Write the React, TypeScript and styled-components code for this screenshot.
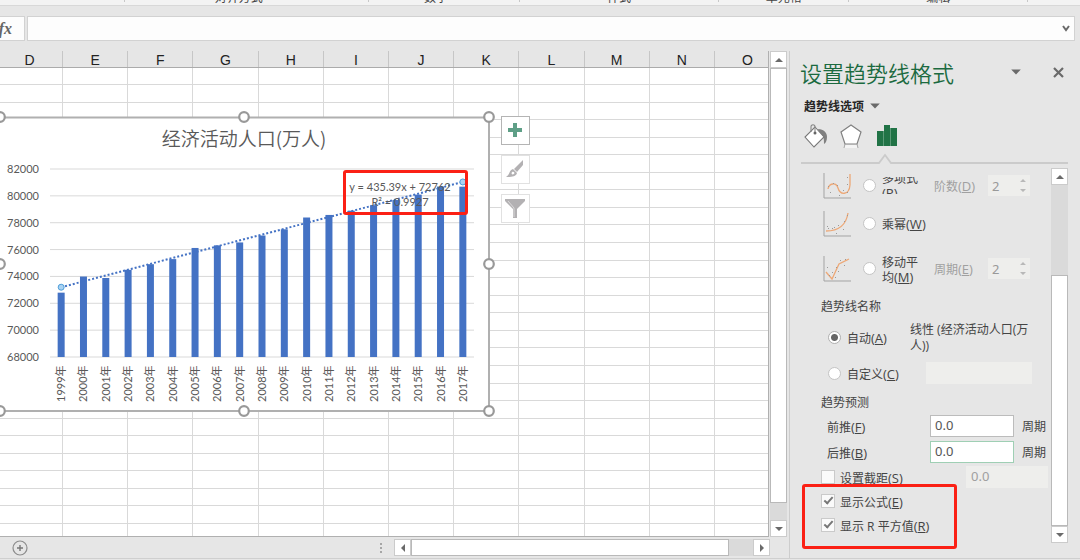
import React from "react";
import styled, { createGlobalStyle, css } from "styled-components";

const Global = createGlobalStyle`
  *, *::before, *::after { box-sizing: border-box; }
  body {
    margin: 0;
    background: #e6e6e6;
    color: #444;
    font: 12px/16px "Open Sans", "Noto Sans CJK SC", sans-serif;
  }
  button, input { font: inherit; color: inherit; margin: 0; padding: 0; }
  h2, h3, p { margin: 0; font-weight: 400; }
  svg { display: block; }
`;

const Window = styled.div`
  display: flex;
  flex-direction: column;
  min-height: 100vh;
  overflow: hidden;
`;

/* ---------- ribbon and formula bar ---------- */

const Ribbon = styled.div`
  display: flex;
  height: 6px;
  background: #f3f3f3;
  border-bottom: 1px solid #d8d8d8;
  overflow: hidden;
`;

const RibbonGroup = styled.div<{ $grow: number }>`
  flex: ${(p) => p.$grow} 1 0;
  display: flex;
  justify-content: center;
  align-items: flex-end;
  height: 2px;
  border-right: 1px solid #c8c8c8;

  &:last-child { border-right: 0; }
`;

const GroupName = styled.span<{ $launcher?: boolean }>`
  margin: 0 ${(p) => (p.$launcher ? 16 : 0)}px -4px 0;
  white-space: nowrap;
`;

const FormulaBar = styled.div`
  display: flex;
  gap: 2px;
  height: 45px;
  padding: 10px 5px 10px 0;
`;

const FxButton = styled.button`
  width: 25px;
  padding-right: 12px;
  border: 1px solid #d2d2d2;
  border-left: 0;
  background: #fdfdfd;
  color: #666;
  font: italic 700 16px/20px "Liberation Serif", serif;
  text-align: right;
  white-space: nowrap;
  direction: rtl;
`;

const FormulaField = styled.div`
  flex: 1;
  display: flex;
  align-items: center;
  border: 1px solid #d2d2d2;
  background: #fdfdfd;
`;

const FormulaInput = styled.input`
  flex: 1;
  border: 0;
  background: transparent;
  outline: 0;
`;

const PlainButton = styled.button`
  display: flex;
  align-items: center;
  justify-content: center;
  width: 16px;
  height: 16px;
  border: 0;
  background: transparent;
`;

/* ---------- worksheet ---------- */

const Main = styled.main`
  flex: 1;
  display: flex;
`;

const Workbook = styled.section`
  flex: 1;
  min-width: 0;
  display: flex;
  flex-direction: column;
`;

const SheetArea = styled.div`
  position: relative;
  flex: 1;
  display: flex;
  gap: 1px;
  padding-right: 2px;
`;

const SheetTable = styled.table`
  flex: 1;
  display: flex;
  flex-direction: column;
  border-right: 1px solid #b0b0b0;
  border-bottom: 1px solid #b0b0b0;
`;

const SheetHead = styled.thead`
  display: block;
  height: 17px;
  border-bottom: 1px solid #ababab;
`;

const SheetBody = styled.tbody`
  flex: 1;
  display: grid;
  grid-template-rows: 17px repeat(25, 1fr) 12px;
  background: #fff;
`;

const SheetRow = styled.tr`
  display: grid;
  grid-template-columns: 63px repeat(10, 1fr) 53px;
`;

const HeadCell = styled.th`
  height: 16px;
  padding: 0;
  border-right: 1px solid #c6c6c6;
  color: #222;
  font: 14px/18px "Liberation Sans", sans-serif;
  text-align: center;

  &:first-child { padding-right: 3px; }
  &:last-child { border-right: 0; padding-left: 12px; }
`;

const Cell = styled.td`
  padding: 0;
  border-right: 1px solid #d9d9d9;
  border-bottom: 1px solid #d9d9d9;

  &:last-child { border-right: 0; }
  tr:last-child > & { border-bottom: 0; }
`;

const ChartObject = styled.div`
  position: absolute;
  left: 0;
  top: 59px;
`;

const ChartTools = styled.div`
  position: absolute;
  left: 501px;
  top: 65px;
  display: flex;
  flex-direction: column;
  gap: 10px;
`;

const ChartToolButton = styled.button<{ $active?: boolean }>`
  display: flex;
  align-items: center;
  justify-content: center;
  width: 29px;
  height: 29px;
  border: 1px solid ${(p) => (p.$active ? "#b4b4b4" : "#e1e1e1")};
  background: #fff;
`;

const Highlight = styled.div<{ $top: number; $left: number; $width: number; $height: number }>`
  position: absolute;
  top: ${(p) => p.$top}px;
  left: ${(p) => p.$left}px;
  width: ${(p) => p.$width}px;
  height: ${(p) => p.$height}px;
  border: 3px solid #fb2015;
  border-radius: 3px;
  pointer-events: none;
`;

/* ---------- scroll bars ---------- */

const ScrollTrack = styled.div<{ $horizontal?: boolean }>`
  display: flex;
  background: #dadada;
  ${(p) =>
    p.$horizontal
      ? css`
          flex: 1;
          height: 17px;
        `
      : css`
          flex-direction: column;
          width: 17px;
        `}
`;

const ScrollButton = styled.button`
  flex: none;
  display: flex;
  align-items: center;
  justify-content: center;
  width: 17px;
  height: 17px;
  border: 1px solid #cbcbcb;
  background: #fff;
`;

const ScrollGap = styled.div<{ $grow?: number; $size?: number }>`
  flex: ${(p) => (p.$grow ? `${p.$grow} 1 0` : `0 0 ${p.$size}px`)};
`;

const ScrollThumb = styled.div<{ $grow: number }>`
  flex: ${(p) => p.$grow} 1 0;
  border: 1px solid #b9b9b9;
  background: #fff;
`;

const SheetTabs = styled.div`
  display: flex;
  align-items: center;
  height: 21px;
  padding: 0 19px 0 12px;
`;

const TabSpace = styled.div`
  flex: 0 0 352px;
`;

const SplitterDots = styled.div`
  display: flex;
  flex-direction: column;
  gap: 2px;
  margin-right: 12px;

  i { width: 2px; height: 2px; background: #a6a6a6; }
`;

const StatusBar = styled.div`
  height: 2px;
  border-top: 1px solid #cfcfcf;
`;

/* ---------- format pane ---------- */

const Pane = styled.aside`
  flex: 0 0 291px;
  display: flex;
  flex-direction: column;
  padding: 6px 12px 0 0;
  border-left: 1px solid #cdcdcd;
`;

const PaneHeader = styled.header`
  display: flex;
  align-items: center;
  height: 30px;
  padding-left: 10px;
`;

const PaneTitle = styled.h2`
  flex: 1;
  color: #1b6a3f;
  font: 350 22px/30px "Noto Sans CJK SC", sans-serif;
`;

const HeaderButtons = styled.div`
  display: flex;
  gap: 26px;
  margin-right: 2px;
`;

const OptionsMenu = styled.button`
  align-self: flex-start;
  display: flex;
  align-items: center;
  gap: 5px;
  height: 24px;
  margin: 7px 0 0 14px;
  border: 0;
  background: transparent;
  color: #262626;
  font: 700 12px/24px "Noto Sans CJK SC", sans-serif;
`;

const PaneTabs = styled.div`
  display: flex;
  gap: 12px;
  height: 35px;
  padding: 6px 0 0 14px;
`;

const PaneTab = styled.button`
  width: 24px;
  height: 24px;
  border: 0;
  background: transparent;
`;

const TabRule = styled.div`
  display: flex;
  align-items: flex-end;
  height: 11px;
  margin: 0 0 4px 11px;
  &::before, &::after { content: ""; height: 2px; background: #cbcbcb; }
  &::before { width: 77px; }
  &::after { flex: 1; }
`;

const PaneBody = styled.div`
  flex: 1;
  display: flex;
  margin-bottom: 15px;
`;

const OptionList = styled.div`
  flex: 1;
  min-width: 0;
`;

const OptionRow = styled.div<{ $height: number; $indent: number }>`
  display: flex;
  align-items: center;
  height: ${(p) => p.$height}px;
  padding-left: ${(p) => p.$indent}px;
`;

const SectionTitle = styled.h3`
  height: 24px;
  padding: 2px 0 0 31px;
  font: 12px/24px "Open Sans", "Noto Sans CJK SC", sans-serif;
`;

const OptionLabel = styled.label<{ $width?: number; $muted?: boolean }>`
  flex: none;
  width: ${(p) => (p.$width ? `${p.$width}px` : "auto")};
  padding-top: 2px;
  color: ${(p) => (p.$muted ? "#a0a0a0" : "#444")};
  line-height: 15px;
`;

const ClippedLabel = styled(OptionLabel)`
  display: flex;
  align-items: center;
  height: 17px;
  padding-top: 0;
  overflow: hidden;
`;

const KeyHint = styled.span`
  font-size: 13px;
`;

const Radio = styled.input.attrs({ type: "radio" })`
  appearance: none;
  flex: none;
  width: 13px;
  height: 13px;
  margin: 0 6px 0 12px;
  border: 1px solid #c4c4c4;
  border-radius: 50%;
  background: #fff;

  &:checked {
    border-color: #b0b0b0;
    background: radial-gradient(circle, #666 3px, #fff 4px);
  }
`;

const Check = styled.input.attrs({ type: "checkbox" })`
  appearance: none;
  flex: none;
  display: flex;
  justify-content: center;
  width: 14px;
  height: 14px;
  margin: 0 5px 0 0;
  border: 1px solid #cacaca;
  background: #fafafa;

  &:checked::after {
    content: "";
    width: 5px;
    height: 9px;
    border: solid #777;
    border-width: 0 2px 2px 0;
    transform: rotate(42deg);
  }
`;

const NumberBox = styled.div<{ $width: number }>`
  flex: none;
  display: flex;
  align-items: center;
  justify-content: space-between;
  width: ${(p) => p.$width}px;
  height: 21px;
  padding-right: 4px;
  background: #eeeeec;
`;

const TextField = styled.input<{ $width: number; $tone?: "plain" | "focus" }>`
  flex: none;
  width: ${(p) => p.$width}px;
  height: 22px;
  padding: 0 5px 2px 4px;
  border: 1px solid ${(p) => (p.$tone === "focus" ? "#9fcfb4" : p.$tone ? "#bcbcbc" : "#eeeeec")};
  border-radius: 0;
  outline: 0;
  background: ${(p) => (p.$tone ? "#fff" : "#eeeeec")};
  color: ${(p) => (p.$tone ? "#555" : "#a0a0a0")};
  font: 13px/18px "Noto Sans", sans-serif;
`;

const SpinnerInput = styled.input`
  width: 24px;
  border: 0;
  padding-left: 4px;
  background: transparent;
  color: #999;
  font: 13px/18px "Noto Sans", sans-serif;
`;

const SeriesName = styled.p`
  width: 125px;
  padding-top: 2px;
`;

const Unit = styled.span`
  margin-left: 8px;
  padding-top: 2px;
  white-space: nowrap;
`;

const DisplayOptions = styled.div`
  position: relative;
`;

/* ---------- drawings ---------- */

type Direction = "up" | "down" | "left" | "right";
const ARROWS: Record<Direction, string> = {
  up: "M1 7 5 3 9 7z",
  down: "M1 3 5 7 9 3z",
  left: "M7 1 3 5 7 9z",
  right: "M3 1 7 5 3 9z",
};

const Arrow = ({ to, size = 10, color = "#6a6a6a" }: { to: Direction; size?: number; color?: string }) => (
  <svg width={size} height={size} viewBox="0 0 10 10">
    <path d={ARROWS[to]} fill={color} />
  </svg>
);

const CURVES = {
  poly: {
    line: "M5 16C6 10 13 9 15 15C17 22 26 23 27 12V1",
    dots: [[5, 13], [7, 19], [10, 10], [14, 12], [16, 22], [20, 17], [24, 19], [24, 11], [24, 4]],
  },
  power: {
    line: "M3 20C14 20 23 15 25 2",
    dots: [[4, 15], [5, 17], [9, 17], [11, 16], [13, 22], [15, 14], [20, 18], [21, 10], [24, 4]],
  },
  moving: {
    line: "M3 16 9 23 16 8 26 3",
    dots: [[4, 11], [6, 19], [9, 16], [12, 21], [13, 11], [15, 15], [17, 4], [21, 9], [22, 3]],
  },
};

const CurveIcon = ({ kind }: { kind: keyof typeof CURVES }) => (
  <svg width="28" height="26" viewBox="0 0 28 26" fill="none">
    <path d="M1 0V25H28" stroke="#a3a3a3" />
    <path d={CURVES[kind].line} stroke="#eda877" strokeWidth="1.3" />
    {CURVES[kind].dots.map(([x, y]) => (
      <rect key={`${x}-${y}`} x={x} y={y} width="1" height="1" fill="#9a9a9a" />
    ))}
  </svg>
);

const BucketIcon = () => (
  <svg width="24" height="24" viewBox="0 0 24 24" fill="none">
    <path d="M14 5C20 5 23 9 23 13C23 16 22 19 20 20C20 15 20 11 15 8z" fill="#808080" />
    <path d="M11 3 20 13 10 23 1 13z" fill="#fff" stroke="#777" strokeWidth="1.1" />
    <path d="M7 8V3C7 0 11 0 11 3V8" stroke="#888" strokeWidth="1.1" />
    <circle cx="11" cy="9" r="1.5" fill="#666" />
  </svg>
);

const PentagonIcon = () => (
  <svg width="24" height="24" viewBox="0 0 24 24" fill="none">
    <path d="M11 1 21 8 17 20H5L1 8z" fill="#fff" stroke="#808080" strokeWidth="1.2" />
    <path d="M5 21H17L18 24H4z" fill="#f4f4f4" />
    <path d="M5 20 4 24M17 20 18 24" stroke="#a5a5a5" />
  </svg>
);

const ColumnsIcon = () => (
  <svg width="24" height="24" viewBox="0 0 24 24">
    <path d="M1 7H7V22H1zM8 1H14V22H8zM15 4H21V22H15z" fill="#217346" />
    <path d="M7.5 7V22M14.5 4V22" stroke="#5b9a77" />
  </svg>
);

const Notch = () => (
  <svg width="14" height="11" viewBox="0 0 14 11" fill="none">
    <path d="M0 10H1L7 2 13 10H14" stroke="#cbcbcb" strokeWidth="1.8" />
  </svg>
);

/* ---------- chart ---------- */

const POPULATION = [
  72791, 73992, 73884, 74492, 74911, 75290, 76120, 76315, 76531, 77046,
  77510, 78388, 78579, 78894, 79300, 79690, 80091, 80694, 80686,
];
const PLOT = { left: 50, right: 474, top: 169, bottom: 357, min: 68000, max: 82000 };
const STEP = (PLOT.right - PLOT.left) / POPULATION.length;
const toX = (i: number) => PLOT.left + STEP * (i + 0.5);
const toY = (v: number) =>
  PLOT.bottom - ((v - PLOT.min) / (PLOT.max - PLOT.min)) * (PLOT.bottom - PLOT.top);
const trend = (i: number) => 435.39 * (i + 1) + 72762;
const LAST = POPULATION.length - 1;
const TICKS = [82000, 80000, 78000, 76000, 74000, 72000, 70000, 68000];
const HANDLES = [
  [0, 117], [244, 117], [489, 117], [0, 264], [489, 264], [0, 411], [244, 411], [489, 411],
];

const ChartText = styled.text<{ $size: number }>`
  fill: #595959;
  font-family: Lato, "Noto Sans CJK SC", sans-serif;
  font-size: ${(p) => p.$size}px;
`;

const TitleText = styled(ChartText)`
  font-weight: 350;
  font-family: "Noto Sans CJK SC", sans-serif;
`;

const Chart = () => (
  <svg width="497" height="308" viewBox="0 110 497 308">
    <rect x="-2" y="117.5" width="491" height="293.5" fill="#fff" stroke="#b0b0b0" strokeWidth="2" />
    <TitleText $size={19} x="244" y="146" textAnchor="middle">经济活动人口(万人)</TitleText>
    {TICKS.map((t) => (
      <g key={t}>
        <line x1={PLOT.left} x2={PLOT.right} y1={toY(t)} y2={toY(t)} stroke="#d9d9d9" />
        <ChartText $size={11} x="39" y={Math.round(toY(t)) + 4} textAnchor="end">{t}</ChartText>
      </g>
    ))}
    {POPULATION.map((v, i) => (
      <g key={i}>
        <rect x={toX(i) - 3.5} y={toY(v)} width="7" height={PLOT.bottom - toY(v)} fill="#4472c4" />
        <ChartText $size={11} transform={`translate(${toX(i) + 4} 402) rotate(-90)`}>{1999 + i}年</ChartText>
      </g>
    ))}
    <line
      x1={toX(0)} y1={toY(trend(0))} x2={toX(LAST)} y2={toY(trend(LAST))}
      stroke="#4472c4" strokeWidth="2" strokeDasharray="2 2"
    />
    {[0, LAST].map((i) => (
      <circle key={i} cx={toX(i)} cy={toY(trend(i))} r="3" fill="#a9d2f2" stroke="#4f9fda" />
    ))}
    <ChartText $size={11} x="400" y="191" textAnchor="middle">y = 435.39x + 72762</ChartText>
    <ChartText $size={11} x="400" y="206" textAnchor="middle">R² = 0.9927</ChartText>
    {HANDLES.map(([x, y]) => (
      <circle key={`${x}-${y}`} cx={x} cy={y} r="4.8" fill="#fff" stroke="#999" strokeWidth="2.2" />
    ))}
  </svg>
);

/* ---------- page ---------- */

const COLUMNS = "DEFGHIJKLMNO".split("");

const Key = ({ text, k }: { text: string; k: string }) => (
  <>{text}<KeyHint>(<u>{k}</u>)</KeyHint></>
);

const Spinner = ({ id }: { id: string }) => (
  <NumberBox $width={42}>
    <SpinnerInput id={id} defaultValue="2" disabled />
    <svg width="6" height="15" viewBox="0 0 6 15">
      <path d="M0 4 3 1 6 4zM0 11 3 14 6 11z" fill="#b8b8b8" />
    </svg>
  </NumberBox>
);

export default function App() {
  return (
    <Window>
      <Global />
      <Ribbon>
        <RibbonGroup $grow={125} />
        <RibbonGroup $grow={244}><GroupName $launcher>对齐方式</GroupName></RibbonGroup>
        <RibbonGroup $grow={151}><GroupName $launcher>数字</GroupName></RibbonGroup>
        <RibbonGroup $grow={199}><GroupName>样式</GroupName></RibbonGroup>
        <RibbonGroup $grow={130}><GroupName>单元格</GroupName></RibbonGroup>
        <RibbonGroup $grow={179}><GroupName>编辑</GroupName></RibbonGroup>
        <RibbonGroup $grow={52} />
      </Ribbon>

      <FormulaBar>
        <FxButton aria-label="插入函数">fx</FxButton>
        <FormulaField>
          <FormulaInput aria-label="编辑栏" />
          <PlainButton aria-label="展开编辑栏">
            <svg width="8" height="7" viewBox="0 0 8 7" fill="none">
              <path d="M1 1 4 5 7 1" stroke="#6a6a6a" strokeWidth="2" />
            </svg>
          </PlainButton>
        </FormulaField>
      </FormulaBar>

      <Main>
        <Workbook>
          <SheetArea>
            <SheetTable>
              <SheetHead>
                <SheetRow>
                  {COLUMNS.map((c) => <HeadCell key={c} scope="col">{c}</HeadCell>)}
                </SheetRow>
              </SheetHead>
              <SheetBody>
                {Array.from({ length: 27 }, (_, r) => (
                  <SheetRow key={r}>
                    {COLUMNS.map((c) => <Cell key={c} />)}
                  </SheetRow>
                ))}
              </SheetBody>
            </SheetTable>
            <ScrollTrack>
              <ScrollButton aria-label="向上滚动"><Arrow to="up" /></ScrollButton>
              <ScrollThumb $grow={435} />
              <ScrollGap $size={17} />
              <ScrollButton aria-label="向下滚动"><Arrow to="down" /></ScrollButton>
            </ScrollTrack>

            <ChartObject>
              <Chart />
              <Highlight $top={60} $left={343} $width={125} $height={45} />
            </ChartObject>
            <ChartTools>
              <ChartToolButton $active aria-label="图表元素">
                <svg width="15" height="15" viewBox="0 0 15 15">
                  <path d="M5 0H9V5H14V9H9V14H5V9H0V5H5z" fill="#5f9f87" />
                </svg>
              </ChartToolButton>
              <ChartToolButton aria-label="图表样式">
                <svg width="19" height="19" viewBox="0 0 19 19">
                  <path d="M17 0V5L11 12 8 9z" fill="#b3b1b3" />
                  <path d="M7 9 11 13C10 17 5 17 0 17C4 15 3 10 7 9z" fill="#b3b1b3" />
                  <path d="M6 12C8 11 9 13 8 14C6 15 5 14 6 12z" fill="#fff" />
                </svg>
              </ChartToolButton>
              <ChartToolButton aria-label="图表筛选器">
                <svg width="21" height="19" viewBox="0 0 21 19">
                  <path d="M0 0H20V2L12 10V19H8V10L0 2z" fill="#b3b1b3" />
                  <path d="M3 2 9 9V18" stroke="#dad9da" fill="none" />
                </svg>
              </ChartToolButton>
            </ChartTools>
          </SheetArea>

          <SheetTabs>
            <PlainButton aria-label="新工作表">
              <svg width="16" height="16" viewBox="0 0 16 16" fill="none">
                <circle cx="8" cy="8" r="7" stroke="#8c8c8c" strokeWidth="1.2" />
                <path d="M8 5V11M5 8H11" stroke="#777" strokeWidth="1.4" />
              </svg>
            </PlainButton>
            <TabSpace />
            <SplitterDots><i /><i /><i /></SplitterDots>
            <ScrollTrack $horizontal>
              <ScrollButton aria-label="向左滚动"><Arrow to="left" /></ScrollButton>
              <ScrollThumb $grow={318} />
              <ScrollGap $size={24} />
              <ScrollButton aria-label="向右滚动"><Arrow to="right" /></ScrollButton>
            </ScrollTrack>
          </SheetTabs>
        </Workbook>

        <Pane>
          <PaneHeader>
            <PaneTitle>设置趋势线格式</PaneTitle>
            <HeaderButtons>
              <PlainButton aria-label="任务窗格选项"><Arrow to="down" size={12} /></PlainButton>
              <PlainButton aria-label="关闭">
                <svg width="11" height="11" viewBox="0 0 11 11">
                  <path d="M1 1 10 10M10 1 1 10" stroke="#6a6a6a" strokeWidth="2.2" />
                </svg>
              </PlainButton>
            </HeaderButtons>
          </PaneHeader>
          <OptionsMenu>趋势线选项 <Arrow to="down" size={12} /></OptionsMenu>
          <PaneTabs>
            <PaneTab aria-label="填充与线条"><BucketIcon /></PaneTab>
            <PaneTab aria-label="效果"><PentagonIcon /></PaneTab>
            <PaneTab aria-label="趋势线选项"><ColumnsIcon /></PaneTab>
          </PaneTabs>
          <TabRule><Notch /></TabRule>

          <PaneBody>
            <OptionList>
              <OptionRow $height={35} $indent={33}>
                <CurveIcon kind="poly" />
                <Radio name="type" id="poly" />
                <ClippedLabel htmlFor="poly" $width={52}>
                  <span>多项式<br /><KeyHint>(<u>P</u>)</KeyHint></span>
                </ClippedLabel>
                <OptionLabel htmlFor="order" $width={54} $muted><Key text="阶数" k="D" /></OptionLabel>
                <Spinner id="order" />
              </OptionRow>
              <OptionRow $height={41} $indent={33}>
                <CurveIcon kind="power" />
                <Radio name="type" id="power" />
                <OptionLabel htmlFor="power"><Key text="乘幂" k="W" /></OptionLabel>
              </OptionRow>
              <OptionRow $height={49} $indent={33}>
                <CurveIcon kind="moving" />
                <Radio name="type" id="moving" />
                <OptionLabel htmlFor="moving" $width={52}>移动平<br /><Key text="均" k="M" /></OptionLabel>
                <OptionLabel htmlFor="period" $width={54} $muted><Key text="周期" k="E" /></OptionLabel>
                <Spinner id="period" />
              </OptionRow>

              <SectionTitle>趋势线名称</SectionTitle>
              <OptionRow $height={40} $indent={26}>
                <Radio name="name" id="auto" defaultChecked />
                <OptionLabel htmlFor="auto" $width={63}><Key text="自动" k="A" /></OptionLabel>
                <SeriesName>线性 (经济活动人口(万人))</SeriesName>
              </OptionRow>
              <OptionRow $height={32} $indent={26}>
                <Radio name="name" id="custom" />
                <OptionLabel htmlFor="custom" $width={79}><Key text="自定义" k="C" /></OptionLabel>
                <TextField $width={106} aria-label="自定义名称" disabled />
              </OptionRow>

              <SectionTitle>趋势预测</SectionTitle>
              <OptionRow $height={26} $indent={37}>
                <OptionLabel htmlFor="forward" $width={103}><Key text="前推" k="F" /></OptionLabel>
                <TextField id="forward" $width={84} $tone="plain" defaultValue="0.0" />
                <Unit>周期</Unit>
              </OptionRow>
              <OptionRow $height={26} $indent={37}>
                <OptionLabel htmlFor="backward" $width={103}><Key text="后推" k="B" /></OptionLabel>
                <TextField id="backward" $width={84} $tone="focus" defaultValue="0.0" />
                <Unit>周期</Unit>
              </OptionRow>
              <OptionRow $height={24} $indent={31}>
                <Check id="intercept" />
                <OptionLabel htmlFor="intercept" $width={126}><Key text="设置截距" k="S" /></OptionLabel>
                <TextField $width={82} aria-label="截距" defaultValue="0.0" disabled />
              </OptionRow>
              <DisplayOptions>
                <OptionRow $height={24} $indent={31}>
                  <Check id="equation" defaultChecked />
                  <OptionLabel htmlFor="equation"><Key text="显示公式" k="E" /></OptionLabel>
                </OptionRow>
                <OptionRow $height={24} $indent={31}>
                  <Check id="rsquared" defaultChecked />
                  <OptionLabel htmlFor="rsquared"><Key text="显示 R 平方值" k="R" /></OptionLabel>
                </OptionRow>
                <Highlight $top={-5} $left={12} $width={155} $height={65} />
              </DisplayOptions>
            </OptionList>
            <ScrollTrack>
              <ScrollButton aria-label="向上滚动"><Arrow to="up" /></ScrollButton>
              <ScrollGap $grow={91} />
              <ScrollThumb $grow={250} />
              <ScrollButton aria-label="向下滚动"><Arrow to="down" /></ScrollButton>
            </ScrollTrack>
          </PaneBody>
        </Pane>
      </Main>
      <StatusBar />
    </Window>
  );
}
